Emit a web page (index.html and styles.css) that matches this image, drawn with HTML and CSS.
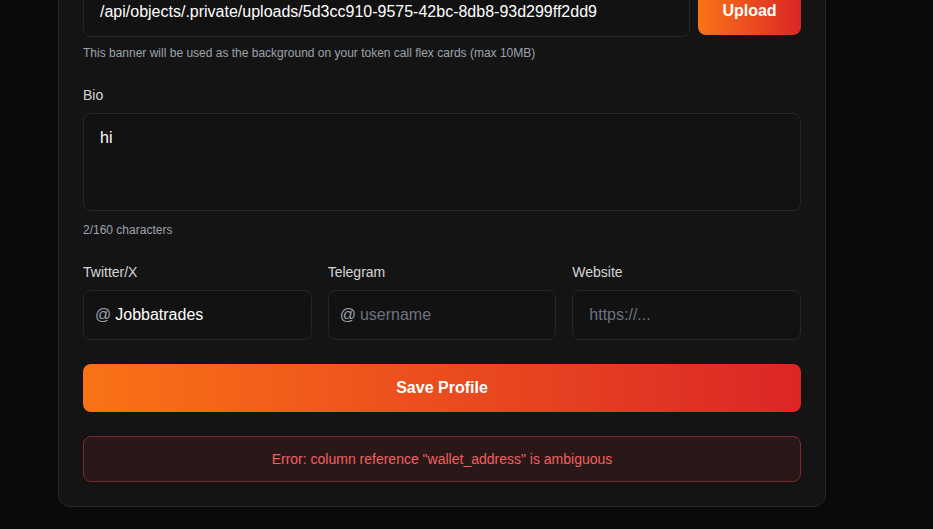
FILE: index.html
```html
<!DOCTYPE html>
<html lang="en">
<head>
<meta charset="utf-8">
<title>Profile</title>
<link rel="stylesheet" href="styles.css">
</head>
<body>
<main class="page">
  <section class="card">
    <div class="field">
      <div class="upload-row">
        <div class="input url">/api/objects/.private/uploads/5d3cc910-9575-42bc-8db8-93d299ff2dd9</div>
        <button class="btn upload">Upload</button>
      </div>
      <p class="hint">This banner will be used as the background on your token call flex cards (max 10MB)</p>
    </div>

    <div class="field">
      <label class="label">Bio</label>
      <div class="input textarea">hi</div>
      <p class="hint counter">2/160 characters</p>
    </div>

    <div class="socials">
      <div class="social">
        <label class="label">Twitter/X</label>
        <div class="input prefixed"><span class="at">@</span><span class="val">Jobbatrades</span></div>
      </div>
      <div class="social">
        <label class="label">Telegram</label>
        <div class="input prefixed"><span class="at">@</span><span class="ph">username</span></div>
      </div>
      <div class="social">
        <label class="label">Website</label>
        <div class="input"><span class="ph">https://...</span></div>
      </div>
    </div>

    <button class="btn save">Save Profile</button>

    <div class="error">Error: column reference "wallet_address" is ambiguous</div>
  </section>
</main>
</body>
</html>
```

FILE: styles.css
```css
* { box-sizing: border-box; }
html, body {
  margin: 0;
  padding: 0;
  background: #0a0a0a;
  font-family: "Liberation Sans", Arial, sans-serif;
  color: #fff;
}
html { overflow: hidden; }
.page {
  display: flow-root;
  width: 933px;
  height: 529px;
  padding-left: 58px;
}
.card {
  width: 768px;
  margin-top: -38px;
  background: #141414;
  border: 1px solid #262626;
  border-radius: 12px;
  padding: 24px;
  display: flex;
  flex-direction: column;
  gap: 24px;
}
.field { display: flex; flex-direction: column; }
.upload-row { display: flex; gap: 8px; align-items: flex-start; }
.input {
  background: #121212;
  border: 1px solid #262626;
  border-radius: 8px;
  padding: 12px 16px;
  font-size: 16px;
  line-height: 24px;
  color: #fff;
  white-space: nowrap;
  overflow: hidden;
}
.url { flex: 1; }
.btn {
  border: none;
  border-radius: 8px;
  background: linear-gradient(90deg, #f97316, #dc2626);
  color: #fff;
  font-family: "Liberation Sans", Arial, sans-serif;
  font-weight: 700;
  font-size: 16px;
  line-height: 24px;
  padding: 12px 24px;
}
.upload { width: 103px; padding: 12px 0; }
.hint {
  margin: 8px 0 0;
  font-size: 12px;
  line-height: 16px;
  color: #9ca3af;
}
.hint.counter { margin-top: 11px; }
.label {
  display: block;
  font-size: 14px;
  line-height: 20px;
  color: #d4d4d8;
  margin-bottom: 8px;
}
.textarea { height: 98px; }
.socials {
  display: grid;
  grid-template-columns: 1fr 1fr 1fr;
  gap: 16px;
}
.prefixed { padding-left: 11px; }
.at { color: #9ca3af; margin-right: 4px; }
.ph { color: #6b7280; }
.save { width: 100%; text-align: center; }
.error {
  background: #2a1718;
  border: 1px solid #7a2a2a;
  border-radius: 8px;
  padding: 12px 16px;
  font-size: 14px;
  line-height: 20px;
  color: #f26060;
  text-align: center;
}
```
